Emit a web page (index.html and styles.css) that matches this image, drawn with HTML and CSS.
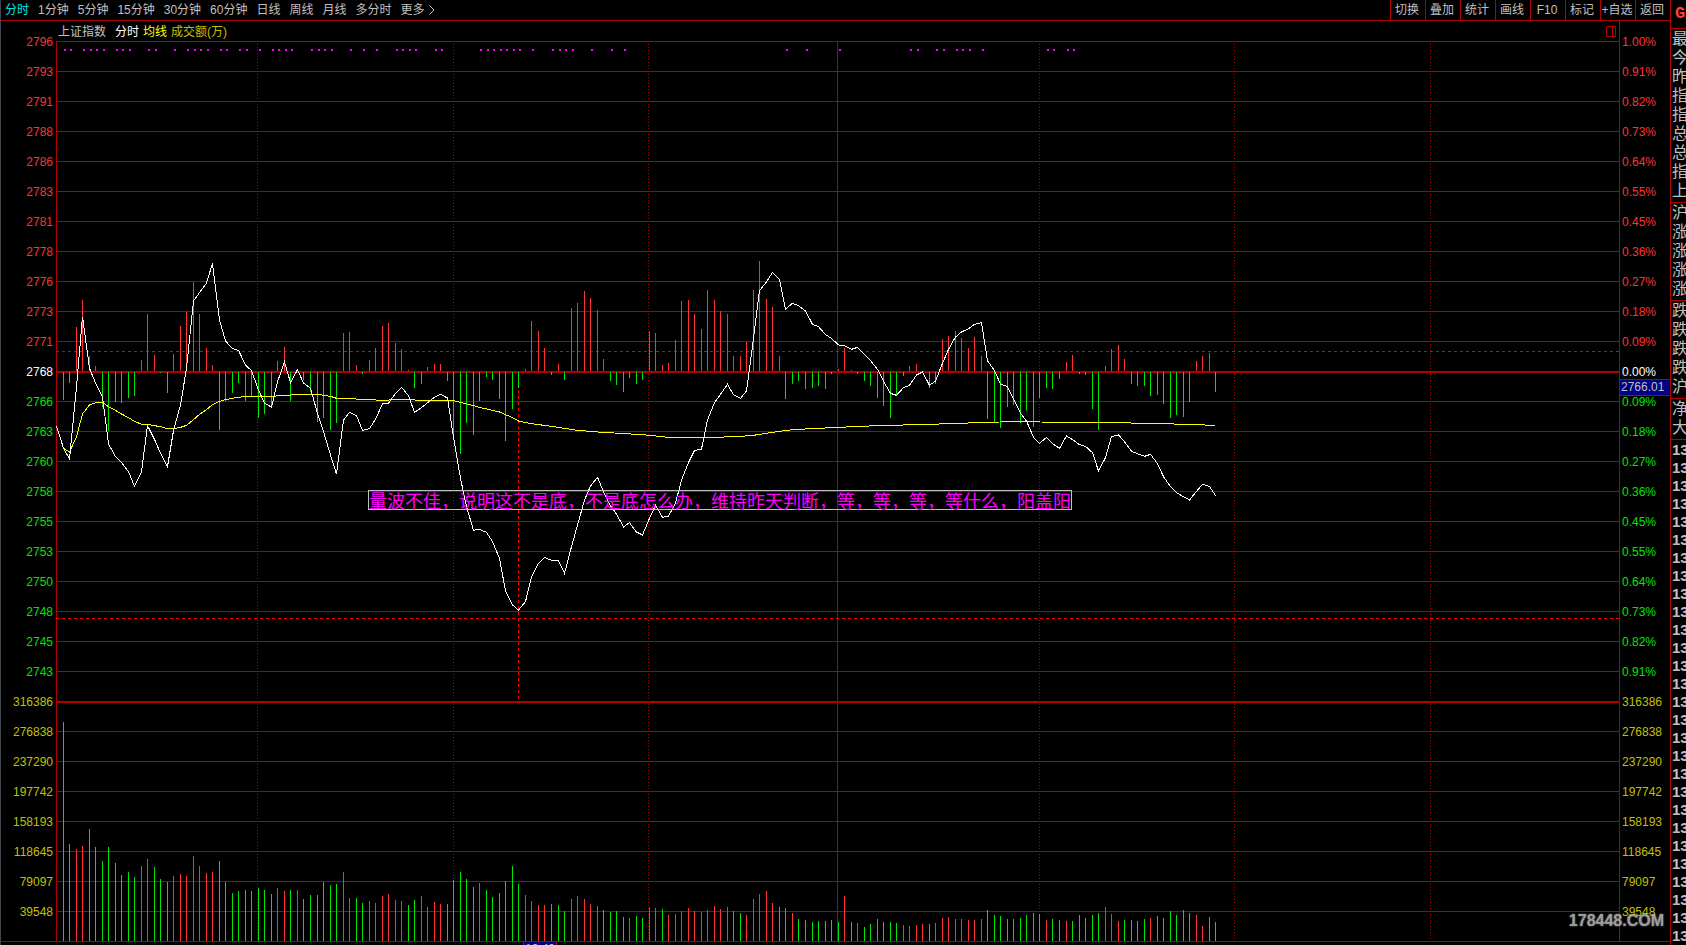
FILE: index.html
```html
<!DOCTYPE html>
<html lang="zh-CN">
<head>
<meta charset="utf-8">
<title>上证指数 分时</title>
<link rel="stylesheet" href="styles.css">
</head>
<body>
<div class="app">
  <main class="main">
    <header class="toolbar">
      <nav class="periods">
        <button class="period active">分时</button>
        <button class="period">1分钟</button>
        <button class="period">5分钟</button>
        <button class="period">15分钟</button>
        <button class="period">30分钟</button>
        <button class="period">60分钟</button>
        <button class="period">日线</button>
        <button class="period">周线</button>
        <button class="period">月线</button>
        <button class="period">多分时</button>
        <button class="period more">更多
          <svg class="chevron" viewBox="0 0 6 10"><path d="M0.5 0.5 L5 5 L0.5 9.5"/></svg>
        </button>
      </nav>
      <div class="tools">
        <button class="tool">切换</button>
        <button class="tool">叠加</button>
        <button class="tool">统计</button>
        <button class="tool">画线</button>
        <button class="tool">F10</button>
        <button class="tool">标记</button>
        <button class="tool">+自选</button>
        <button class="tool">返回</button>
      </div>
    </header>
    <section class="chart">
      <ol class="axis axis-left" id="axis-left"></ol>
      <div class="center">
        <div class="legend">
          <span class="name">上证指数</span>
          <span class="l-price">分时</span>
          <span class="l-avg">均线</span>
          <span class="l-vol">成交额(万)</span>
          <svg class="pane-icon" viewBox="0 0 10 11"><path d="M0.5 0.5 H9.5 V10.5 H0.5 Z M6.5 0.5 V10.5"/></svg>
        </div>
        <div class="plot">
          <svg class="canvas" id="canvas" viewBox="56 41 1563 900" preserveAspectRatio="none"></svg>
          <p class="note">量波不佳，说明这不是底，不是底怎么办，维持昨天判断，等，等，等，等什么，阳盖阳</p>
        </div>
      </div>
      <div class="right">
        <ol class="axis axis-right" id="axis-right"></ol>
        <div class="cursor-price">2766.01</div>
      </div>
      <div class="watermark">178448.COM</div>
    </section>
    <footer class="time-axis"><span class="cursor-time">10:40</span></footer>
  </main>
  <aside class="side">
    <div class="side-head">G</div>
    <ul class="group"><li>最</li><li>今</li><li>昨</li><li>指</li><li>指</li><li>总</li><li>总</li><li>指</li><li>上</li></ul>
    <ul class="group"><li>沪</li><li>涨</li><li>涨</li><li>涨</li><li>涨</li></ul>
    <ul class="group"><li>跌</li><li>跌</li><li>跌</li><li>跌</li><li>沪</li></ul>
    <ul class="group"><li>净</li><li>大</li></ul>
    <ul class="ticks" id="ticks"></ul>
  </aside>
</div>
<script src="chart.js"></script>
</body>
</html>
```

FILE: styles.css
```css
* { box-sizing: border-box; }

:root {
  --line: #b00000;
  --up: #ff3232;
  --down: #00e600;
  --gold: #c0c000;
  --text: #c0c0c0;
}

body {
  margin: 0;
  background: #000;
  color: var(--text);
  font: 12px/20px "Liberation Sans", "Noto Sans CJK SC", sans-serif;
}

ol, ul, p { margin: 0; padding: 0; list-style: none; }

button {
  padding: 0;
  border: 0;
  background: none;
  color: inherit;
  font: inherit;
  white-space: nowrap;
}

.app {
  display: grid;
  grid-template-columns: minmax(0, 1fr) 16px;
  height: 100vh;
  overflow: hidden;
}

.main {
  display: flex;
  flex-direction: column;
  min-height: 0;
  border-left: 1px solid #404850;
}

.toolbar {
  display: flex;
  justify-content: space-between;
  height: 21px;
  border-bottom: 1px solid var(--line);
}

.periods { display: flex; gap: 9px; padding-left: 4px; }
.period.active { color: #00e6e6; }
.more { display: flex; align-items: center; gap: 4px; }
.chevron { width: 6px; height: 10px; fill: none; stroke: var(--text); }

.tools { display: flex; }
.tool { width: 35px; padding-right: 2px; border-left: 1px solid var(--line); }

.chart {
  position: relative;
  display: grid;
  grid-template-columns: 55px minmax(0, 1fr) 51px;
  flex: 1;
  min-height: 0;
}

.axis {
  display: grid;
  grid-auto-rows: 1fr;
  height: 100%;
  padding: 6px 3px 14px;
  align-items: center;
}
.axis-left { text-align: right; }
.axis-right { padding-left: 2px; }
.axis li { line-height: 14px; }
.axis .up { color: var(--up); }
.axis .zero { color: #fff; }
.axis .down { color: var(--down); }
.axis .vol { color: var(--gold); }

.center { display: flex; flex-direction: column; min-height: 0; }

.legend {
  display: flex;
  align-items: center;
  gap: 4px;
  height: 20px;
  padding: 1px 3px 0 2px;
}
.name { margin-right: 5px; }
.l-price { color: #fff; }
.l-avg { color: #ff0; }
.l-vol { color: var(--gold); }
.pane-icon {
  width: 10px;
  height: 11px;
  margin-left: auto;
  fill: none;
  stroke: var(--line);
}

.plot { position: relative; flex: 1; min-height: 0; }
.canvas { display: block; width: 100%; height: 100%; shape-rendering: crispEdges; }
.canvas path { fill: none; stroke-width: 1; }
.canvas .grid { stroke: var(--line); }
.canvas .major { stroke: var(--line); stroke-width: 2; }
.canvas .dotted { stroke: var(--line); stroke-dasharray: 1 2; }
.canvas .dashed { stroke: #e00000; stroke-dasharray: 3 3; }
.canvas .cross { stroke: #ff0000; stroke-dasharray: 3 3; }
.canvas .up { stroke: var(--up); }
.canvas .down { stroke: var(--down); }
.canvas .avg { stroke: #ff0; }
.canvas .price { stroke: #fff; }
.canvas .marks { fill: #f0f; stroke: none; }

.note {
  position: absolute;
  left: 312px;
  top: 449px;
  border: 1px solid var(--text);
  color: #f0f;
  font-size: 18px;
  line-height: 18px;
  white-space: nowrap;
  font-family: "Noto Sans CJK SC", sans-serif;
}

.right { position: relative; border-left: 1px solid var(--line); }
.cursor-price {
  position: absolute;
  left: 0;
  right: 0;
  top: 358px;
  padding-left: 1px;
  border: 1px solid var(--line);
  border-width: 1px 0;
  background: #000080;
  line-height: 15px;
}

.watermark {
  position: absolute;
  right: 6px;
  bottom: 8px;
  color: #b0b0b0;
  font: bold 16px/24px "Liberation Sans Narrow", "Liberation Sans", sans-serif;
  text-shadow: 0 0 2px #888;
  opacity: 0.9;
}

.time-axis {
  height: 4px;
  padding-left: 522px;
  border-top: 1px solid var(--line);
  overflow: hidden;
}
.cursor-time {
  display: block;
  width: 34px;
  border: 1px solid var(--line);
  border-width: 0 1px;
  background: #000080;
  line-height: 15px;
  text-align: center;
}

.side {
  border-left: 1px solid var(--line);
  overflow: hidden;
  font-size: 16px;
}
.side-head {
  height: 29px;
  padding-left: 4px;
  border-bottom: 1px solid var(--line);
  color: #ff4040;
  font: bold 17px/28px "Liberation Mono", monospace;
}
.group { padding: 1px 0 1px 1px; border-bottom: 1px solid var(--line); }
.group li { line-height: 18px; height: 19px; white-space: nowrap; }
.ticks { padding: 1px 0 0 1px; }
.ticks li { font-size: 15px; font-weight: bold; line-height: 18px; }
```

FILE: chart.js
```js
const LEFT = 56, RIGHT = 1619, TOP = 41, BOTTOM = 941, ROW = 30;

// One slot per minute; 240 trading minutes across the plot.
const xAt = i => Math.round(LEFT + i * 6.513);
// Intraday values are stored in thirds of a row unit, measured from y = 240.
const yAt = v => 240 + v / 3;

const price = [
  558,625,657,440,230,385,429,470,612,650,668,695,739,695,557,598,640,680,572,495,
  385,183,158,129,70,240,303,326,331,375,392,450,490,501,425,366,428,389,429,445,
  520,575,645,702,540,517,527,571,566,538,491,490,460,442,467,517,503,488,472,463,
  474,592,715,800,871,868,877,905,955,1053,1095,1110,1085,1010,970,952,961,962,1000,920,
  855,780,738,712,755,798,822,861,848,876,885,835,796,832,828,790,720,668,632,627,
  540,488,463,433,464,475,453,295,152,126,97,119,207,190,197,213,253,260,284,295,
  315,317,328,322,343,362,388,424,460,466,443,436,405,396,436,423,370,328,291,276,
  266,253,248,362,392,432,440,476,520,543,592,610,592,611,625,588,599,614,619,638,
  693,653,590,585,605,634,641,649,643,671,710,740,758,770,780,754,733,739,767
];

const average = [
  [1,625],[2,636],[3,590],[4,522],[5,495],[6,488],[7,487],[8,500],[9,511],[10,522],
  [11,533],[12,544],[13,553],[14,553],[15,557],[16,560],[17,566],[18,566],[19,562],
  [20,556],[21,539],[22,523],[23,509],[24,494],[25,484],[26,479],[27,475],[28,472],
  [29,469],[33,469],[35,466],[38,463],[40,463],[42,469],[43,475],[45,476],[50,481],
  [53,478],[56,481],[61,482],[64,497],[65,502],[68,516],[70,533],[71,543],[73,551],
  [76,559],[80,571],[83,576],[90,584],[94,592],[100,593],[105,589],[107,586],
  [110,577],[113,569],[120,562],[126,557],[134,553],[140,549],[148,544],[151,546],
  [160,547],[170,551],[178,556]
];

const ZERO = 395;
const strength = [
  480,429,261,180,348,378,500,573,486,489,474,468,360,222,345,399,459,342,258,216,
  126,222,324,375,570,483,459,429,483,468,534,522,500,363,321,483,395,420,456,546,
  534,570,549,279,276,375,402,360,324,258,249,309,327,390,444,432,381,372,372,423,
  590,642,549,585,483,411,420,477,603,507,444,387,243,273,324,405,372,420,204,189,
  153,174,210,357,423,435,456,414,432,420,273,279,375,369,300,183,180,222,267,150,
  180,213,222,348,348,306,150,63,177,201,348,477,432,423,447,444,438,447,402,387,
  324,390,402,423,438,474,498,534,465,408,378,372,395,444,432,297,288,273,294,324,
  291,348,537,546,564,501,495,549,513,561,474,444,447,417,366,345,402,405,507,570,
  378,327,315,357,432,438,438,468,465,492,534,525,531,486,363,348,339,456
];

// Turnover bar heights; negative values are falling minutes.
const volume = [
  -219,-97,92,95,-112,-94,-80,-94,-78,-66,-69,-64,75,82,-74,-62,-59,65,67,65,
  85,75,68,69,-80,-59,-48,-50,-51,-50,-53,-51,-47,53,50,-51,51,-42,-46,-46,
  -59,-56,-57,69,43,-43,-38,40,38,45,47,41,40,-36,-41,45,34,39,37,-37,
  -61,-69,-62,-54,58,-51,-44,-48,-60,-75,-57,46,40,36,36,-37,-36,-30,42,45,
  42,37,35,-31,-29,-30,-24,23,-25,-23,34,33,-32,26,27,30,33,30,29,31,
  35,32,34,-30,-28,26,42,47,50,38,-34,-33,28,-22,-21,-19,-20,-20,-21,-19,
  45,-19,18,-14,-17,-22,-19,-19,-18,16,15,16,17,-17,18,23,24,22,22,21,
  21,22,-31,-26,-25,-22,-22,-23,-26,-28,-27,21,-22,-21,20,-20,-26,-23,-26,-28,
  34,27,20,-21,-21,-20,-22,23,-25,-23,-30,-26,-31,-28,26,15,-24,-19
];

const marks = [
  1,2,4,5,6,7,9,10,11,14,15,18,20,21,22,23,25,26,28,29,31,33,34,35,36,39,40,41,42,
  45,47,49,52,53,54,55,58,59,65,66,67,68,69,70,71,73,76,77,78,79,82,85,87,112,115,
  120,131,132,135,136,138,139,140,142,152,153,155,156
];

const canvas = document.getElementById('canvas');
function draw(cls, d) {
  const p = document.createElementNS('http://www.w3.org/2000/svg', 'path');
  p.setAttribute('class', cls);
  p.setAttribute('d', d);
  canvas.appendChild(p);
}
const h = y => `M${LEFT} ${y + 0.5}H${RIGHT}`;
const v = (x, a, b) => `M${x + 0.5} ${a}V${b}`;

let rows = '';
for (let k = 0; k < 30; k++) if (k !== 11 && k !== 22) rows += h(TOP + k * ROW);
draw('grid', rows + v(LEFT, TOP, BOTTOM) + v(837, TOP, BOTTOM));
draw('major', `M${LEFT} 372H${RIGHT}M${LEFT} 702H${RIGHT}`);
draw('dotted', [257, 453, 648, 1039, 1234, 1430].map(x => v(x, 44, BOTTOM)).join(''));
draw('dashed', h(351));
draw('cross', h(618) + v(518, 372, 701));

let up = '', down = '';
strength.forEach((s, n) => {
  const x = xAt(n + 1);
  if (s < ZERO) up += v(x, Math.round(yAt(s)), 371);
  if (s > ZERO) down += v(x, 372, Math.round(yAt(s)));
});
volume.forEach((s, n) => {
  const bar = v(xAt(n + 1), BOTTOM - Math.abs(s), BOTTOM);
  if (s > 0) up += bar; else down += bar;
});
draw('up', up);
draw('down', down);
draw('avg', 'M' + average.map(([i, y]) => `${xAt(i) + 0.5} ${yAt(y)}`).join('L'));
draw('price', 'M' + price.map((y, i) => `${xAt(i) + 0.5} ${yAt(y)}`).join('L'));
draw('marks', marks.map(i => `M${xAt(i) + 1} 49h2v2h-2z`).join(''));

const points = [2796,2793,2791,2788,2786,2783,2781,2778,2776,2773,2771,2768,2766,2763,
  2760,2758,2755,2753,2750,2748,2745,2743];
const rates = ['1.00','0.91','0.82','0.73','0.64','0.55','0.45','0.36','0.27','0.18','0.09',
  '0.00','0.09','0.18','0.27','0.36','0.45','0.55','0.64','0.73','0.82','0.91'];
const amounts = [316386,276838,237290,197742,158193,118645,79097,39548];

function fill(id, labels) {
  const list = document.getElementById(id);
  labels.forEach((text, k) => {
    const li = document.createElement('li');
    li.className = k < 11 ? 'up' : k === 11 ? 'zero' : k < 22 ? 'down' : 'vol';
    li.textContent = text;
    list.appendChild(li);
  });
}
fill('axis-left', [...points, ...amounts]);
fill('axis-right', [...rates.map(r => r + '%'), ...amounts]);

const ticks = document.getElementById('ticks');
for (let k = 0; k < 28; k++) {
  const li = document.createElement('li');
  li.textContent = '13';
  ticks.appendChild(li);
}
```
